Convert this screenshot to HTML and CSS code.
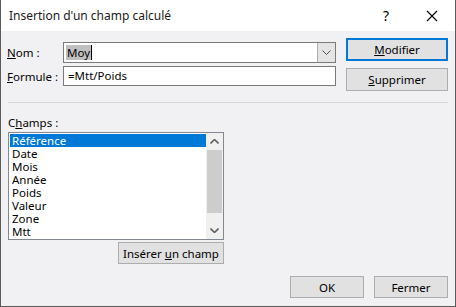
FILE: index.html
```html
<!DOCTYPE html>
<html lang="fr">
<head>
    <meta charset="UTF-8">
    <title>Insertion d'un champ calculé</title>
    <link rel="stylesheet" href="styles.css">
</head>
<body>
    <div class="window">
        <div class="titlebar">
            <span class="title">Insertion d'un champ calculé</span>
            <span class="help">?</span>
            <span class="close">
                <svg width="12" height="12" viewBox="0 0 12 12"><path d="M1 1L11 11M11 1L1 11" stroke="#000" stroke-width="1.1" fill="none"/></svg>
            </span>
        </div>

        <div class="content">
            <div class="top">
                <div class="fields">
                    <div class="field-row">
                        <label class="label"><u>N</u>om :</label>
                        <div class="combo">
                            <span class="combo-text"><span class="selected-text">Moy</span><span class="caret"></span></span>
                            <span class="combo-btn">
                                <svg width="9" height="5" viewBox="0 0 9 5"><path d="M0.5 0.5L4.5 4.5L8.5 0.5" stroke="#555" stroke-width="1" fill="none"/></svg>
                            </span>
                        </div>
                    </div>
                    <div class="field-row">
                        <label class="label"><u>F</u>ormule :</label>
                        <div class="textbox">=Mtt/Poids</div>
                    </div>
                </div>
                <div class="side-buttons">
                    <button class="btn btn-default"><u>M</u>odifier</button>
                    <button class="btn"><u>S</u>upprimer</button>
                </div>
            </div>

            <div class="separator"></div>

            <div class="fields-section">
                <div class="label">C<u>h</u>amps :</div>
                <div class="listbox">
                    <ul class="items">
                        <li class="active">Référence</li>
                        <li>Date</li>
                        <li>Mois</li>
                        <li>Année</li>
                        <li>Poids</li>
                        <li>Valeur</li>
                        <li>Zone</li>
                        <li>Mtt</li>
                    </ul>
                    <div class="scrollbar">
                        <span class="arrow">
                            <svg width="9" height="5" viewBox="0 0 9 5"><path d="M0.5 4.5L4.5 0.5L8.5 4.5" stroke="#606060" stroke-width="1.6" fill="none"/></svg>
                        </span>
                        <span class="thumb"></span>
                        <span class="track"></span>
                        <span class="arrow">
                            <svg width="9" height="5" viewBox="0 0 9 5"><path d="M0.5 0.5L4.5 4.5L8.5 0.5" stroke="#606060" stroke-width="1.6" fill="none"/></svg>
                        </span>
                    </div>
                </div>
                <div class="insert-row">
                    <button class="btn btn-insert">Insérer <u>u</u>n champ</button>
                </div>
            </div>

            <div class="footer">
                <button class="btn btn-footer">OK</button>
                <button class="btn btn-footer">Fermer</button>
            </div>
        </div>
    </div>
</body>
</html>
```

FILE: styles.css
```css
body {
    margin: 0;
    font-family: 'Noto Sans', sans-serif;
    font-size: 11.5px;
    color: #000;
    background: #f1f0f3;
}

.window {
    width: 456px;
    height: 307px;
    box-sizing: border-box;
    border: 1px solid #5a5a5a;
    border-top: none;
    background: #f1f0f3;
    display: flex;
    flex-direction: column;
}

.titlebar {
    height: 31px;
    background: #fff;
    display: flex;
    align-items: center;
    padding-left: 8px;
    flex-shrink: 0;
}

.title {
    flex: 1;
    font-size: 12px;
    color: #1a1a1a;
}

.help {
    width: 46px;
    text-align: center;
    font-size: 14px;
}

.close {
    width: 46px;
    display: flex;
    justify-content: center;
}

.content {
    padding: 0 7px 0 6px;
    flex: 1;
    display: flex;
    flex-direction: column;
}

.top {
    display: flex;
    gap: 10px;
    height: 60px;
}

.fields {
    padding-top: 11px;
    display: flex;
    flex-direction: column;
    gap: 3px;
}

.field-row {
    display: flex;
    align-items: center;
}

.label {
    width: 56px;
    color: #000;
}

.combo {
    width: 273px;
    height: 21px;
    box-sizing: border-box;
    border: 1px solid #7a7a7a;
    background: #fff;
    display: flex;
}

.combo-text {
    flex: 1;
    padding: 1px 2px;
    display: flex;
    align-items: center;
}

.selected-text {
    background: #c0c0c0;
    line-height: 15px;
    padding: 0 1px;
}

.caret {
    width: 1px;
    height: 15px;
    background: #000;
}

.combo-btn {
    width: 17px;
    background: #e4e4e4;
    border-left: 1px solid #adadad;
    display: flex;
    align-items: center;
    justify-content: center;
}

.textbox {
    width: 273px;
    height: 20px;
    box-sizing: border-box;
    border: 1px solid #7a7a7a;
    background: #fff;
    padding: 0 4px;
    line-height: 18px;
}

.side-buttons {
    padding-top: 7px;
    display: flex;
    flex-direction: column;
    gap: 7px;
}

.btn {
    font-family: 'Noto Sans', sans-serif;
    font-size: 11.5px;
    color: #000;
    background: #e1e1e1;
    border: 1px solid #adadad;
    padding: 0;
    margin: 0;
    width: 102px;
    height: 23px;
    box-sizing: border-box;
}

.btn-default {
    border: 2px solid #0078d7;
}

.separator {
    height: 1px;
    background: #d6d6d6;
    margin: 11px 0 0 1px;
}

.fields-section {
    padding-top: 12px;
    width: 216px;
    margin-left: 1px;
}

.fields-section .label {
    width: auto;
    line-height: 16px;
    margin-bottom: 1px;
}

.listbox {
    height: 108px;
    box-sizing: border-box;
    border: 1px solid #828790;
    background: #fff;
    display: flex;
}

.items {
    list-style: none;
    margin: 0;
    padding: 1px 0 0 1px;
    flex: 1;
}

.items li {
    height: 13px;
    line-height: 13px;
    padding-left: 2px;
}

.items li.active {
    background: #0078d7;
    color: #fff;
}

.scrollbar {
    width: 17px;
    display: flex;
    flex-direction: column;
    background: #f0f0f0;
}

.arrow {
    height: 17px;
    display: flex;
    align-items: center;
    justify-content: center;
}

.thumb {
    height: 63px;
    background: #cdcdcd;
    margin: 0 1px;
}

.track {
    flex: 1;
}

.insert-row {
    display: flex;
    justify-content: flex-end;
    margin-top: 2px;
}

.btn-insert {
    width: 106px;
    height: 22px;
}

.footer {
    display: flex;
    justify-content: flex-end;
    gap: 10px;
    margin-top: 12px;
}

.btn-footer {
    width: 74px;
    height: 22px;
}
```
